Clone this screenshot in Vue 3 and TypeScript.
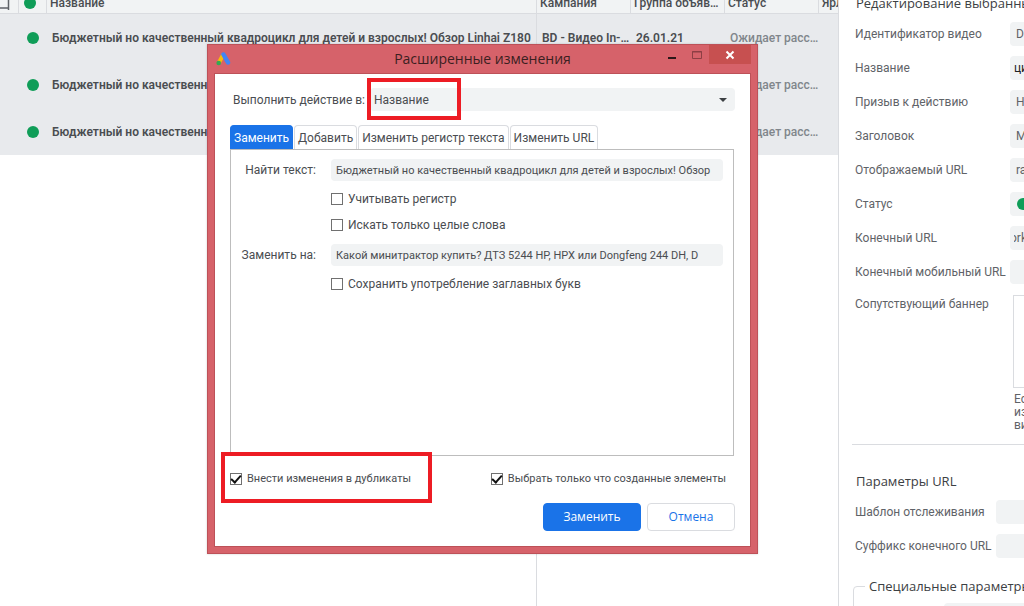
<script setup lang="ts">
import { ref } from 'vue'

interface Row {
  name: string
  campaign: string
  group: string
  status: string
}

const rows: Row[] = Array.from({ length: 3 }, () => ({
  name: 'Бюджетный но качественный квадроцикл для детей и взрослых! Обзор Linhai Z180',
  campaign: 'BD - Видео In-Stream',
  group: '26.01.21',
  status: 'Ожидает рассмотрения',
}))

interface Field {
  id: string
  label: string
  value: string
  kind?: 'edge' | 'cut' | 'dot'
}

const fields: Field[] = [
  { id: 'video-id', label: 'Идентификатор видео', value: 'Do' },
  { id: 'title', label: 'Название', value: 'цик', kind: 'edge' },
  { id: 'cta', label: 'Призыв к действию', value: 'Н' },
  { id: 'headline', label: 'Заголовок', value: 'М' },
  { id: 'display-url', label: 'Отображаемый URL', value: 'ra' },
  { id: 'status', label: 'Статус', value: '', kind: 'dot' },
  { id: 'final-url', label: 'Конечный URL', value: 'ork', kind: 'cut' },
  { id: 'mobile-url', label: 'Конечный мобильный URL', value: '' },
]

const urlFields: Field[] = [
  { id: 'template', label: 'Шаблон отслеживания', value: '' },
  { id: 'suffix', label: 'Суффикс конечного URL', value: '' },
]

const tabs = ['Заменить', 'Добавить', 'Изменить регистр текста', 'Изменить URL']
const activeTab = ref(0)
const target = ref('Название')
const findText = ref('Бюджетный но качественный квадроцикл для детей и взрослых! Обзор')
const replaceText = ref('Какой минитрактор купить? ДТЗ 5244 HP, HPX или Dongfeng 244 DH, D')
const matchCase = ref(false)
const wholeWords = ref(false)
const keepCaps = ref(false)
const applyDuplicates = ref(true)
const selectCreated = ref(true)
</script>

<template>
  <div class="app">
    <main class="list">
      <table class="grid">
        <colgroup>
          <col class="c-flag" />
          <col class="c-dot" />
          <col />
          <col class="c-mid" />
          <col class="c-mid" />
          <col class="c-mid" />
          <col class="c-last" />
        </colgroup>
        <thead>
          <tr>
            <th>
              <svg class="flag" width="12" height="20" viewBox="0 0 12 20" aria-hidden="true">
                <path d="M0 15H8.500M8.500 0V17" fill="none" stroke="#5f6368" stroke-width="1.5" />
              </svg>
            </th>
            <th><span class="dot"></span></th>
            <th class="name">Название</th>
            <th>Кампания</th>
            <th>Группа объявлений</th>
            <th>Статус</th>
            <th class="clip">Ярлыки</th>
          </tr>
        </thead>
        <tbody>
          <tr v-for="(row, i) in rows" :key="i" class="row">
            <td></td>
            <td><span class="dot"></span></td>
            <td class="name">{{ row.name }}</td>
            <td>{{ row.campaign }}</td>
            <td>{{ row.group }}</td>
            <td class="muted">{{ row.status }}</td>
            <td></td>
          </tr>
          <tr class="rest">
            <td></td>
            <td></td>
            <td class="name"></td>
            <td colspan="4"></td>
          </tr>
        </tbody>
      </table>
    </main>

    <aside class="side">
      <h2>Редактирование выбранных</h2>
      <div class="fields">
        <div v-for="f in fields" :key="f.id" class="field">
          <label :for="f.id">{{ f.label }}</label>
          <span class="box">
            <span v-if="f.kind === 'dot'" class="dot"></span>
            <input :id="f.id" :class="f.kind" type="text" :value="f.value" />
          </span>
        </div>
      </div>
      <div class="banner">
        <span class="banner-label">Сопутствующий баннер</span>
        <div class="banner-body">
          <div class="preview"></div>
          <p>Если<br />изоб<br />виде</p>
        </div>
      </div>
      <hr />
      <h2 class="params">Параметры URL</h2>
      <div class="fields url">
        <div v-for="f in urlFields" :key="f.id" class="field">
          <label :for="f.id">{{ f.label }}</label>
          <span class="box"><input :id="f.id" type="text" :value="f.value" /></span>
        </div>
      </div>
      <fieldset class="custom">
        <legend>Специальные параметры</legend>
        <input type="text" aria-label="Специальный параметр" />
      </fieldset>
    </aside>

    <section class="dialog" role="dialog" aria-labelledby="dialog-title">
      <header class="titlebar">
        <svg class="logo" width="16" height="14" viewBox="0 0 16 14" aria-hidden="true">
          <path d="M7 3L3 10.500" stroke="#fbbc04" stroke-width="4" stroke-linecap="round" />
          <path d="M7.500 2.500L12 10.500" stroke="#4285f4" stroke-width="4.500" stroke-linecap="round" />
          <circle cx="2.700" cy="11" r="2.300" fill="#34a853" />
        </svg>
        <h1 id="dialog-title">Расширенные изменения</h1>
        <div class="controls">
          <button type="button" aria-label="Свернуть">
            <svg width="10" height="10" viewBox="0 0 10 10"><path d="M1 8H9" stroke="#2b1718" stroke-width="2" /></svg>
          </button>
          <button type="button" aria-label="Развернуть">
            <svg width="10" height="10" viewBox="0 0 10 10"><path d="M.5 1.500H9.500V8.500H.5ZM0 2H10" fill="none" stroke="#8d3f44" /></svg>
          </button>
          <button type="button" class="close" aria-label="Закрыть">
            <svg width="10" height="10" viewBox="0 0 10 10"><path d="M1.500 1.500L8.500 8.500M8.500 1.500L1.500 8.500" stroke="#fff" stroke-width="2" /></svg>
          </button>
        </div>
      </header>

      <div class="content">
        <div class="action">
          <label for="target">Выполнить действие в:</label>
          <span class="select">
            <select id="target" v-model="target">
              <option>Название</option>
            </select>
            <svg width="8" height="4" viewBox="0 0 8 4" aria-hidden="true"><path d="M0 0H8L4 4Z" fill="#3c4043" /></svg>
          </span>
        </div>

        <div class="tabs" role="tablist">
          <button
            v-for="(t, i) in tabs"
            :key="t"
            type="button"
            role="tab"
            :aria-selected="activeTab === i"
            :class="{ active: activeTab === i }"
            @click="activeTab = i"
          >{{ t }}</button>
        </div>

        <div class="panel" role="tabpanel">
          <div class="line">
            <label for="find">Найти текст:</label>
            <input id="find" v-model="findText" type="text" />
          </div>
          <label class="check"><input v-model="matchCase" type="checkbox" />Учитывать регистр</label>
          <label class="check"><input v-model="wholeWords" type="checkbox" />Искать только целые слова</label>
          <div class="line">
            <label for="replace">Заменить на:</label>
            <input id="replace" v-model="replaceText" type="text" />
          </div>
          <label class="check"><input v-model="keepCaps" type="checkbox" />Сохранить употребление заглавных букв</label>
        </div>

        <div class="options">
          <label class="check"><input v-model="applyDuplicates" type="checkbox" />Внести изменения в дубликаты</label>
          <label class="check"><input v-model="selectCreated" type="checkbox" />Выбрать только что созданные элементы</label>
        </div>

        <footer class="buttons">
          <button type="button" class="primary">Заменить</button>
          <button type="button">Отмена</button>
        </footer>
      </div>

      <div class="mark mark-target"></div>
      <div class="mark mark-duplicates"></div>
    </section>
  </div>
</template>

<style>
body {
  margin: 0;
  background: #fff;
}
</style>

<style scoped>
* {
  box-sizing: border-box;
}

.app {
  position: relative;
  display: flex;
  height: 100vh;
  overflow: hidden;
  font-family: Roboto, "Liberation Sans", sans-serif;
  font-size: 12px;
  line-height: 16px;
  color: #4a4d51;
}

button,
input,
select {
  font: inherit;
  color: inherit;
  margin: 0;
}

.dot {
  display: block;
  width: 12px;
  height: 12px;
  border-radius: 50%;
  background: #0f9d58;
}

/* Video list */
.list {
  flex: 1;
  min-width: 0;
  overflow: hidden;
}

.grid {
  width: 100%;
  height: calc(100vh + 12px);
  margin-top: -12px;
  table-layout: fixed;
  border-collapse: separate;
  border-spacing: 0;
}

.c-flag { width: 19px; }
.c-dot { width: 28px; }
.c-mid { width: 94px; }
.c-last { width: 19px; }

.grid th {
  height: 26px;
  padding: 4px 0 0 3px;
  border-right: 1px solid #dadce0;
  border-bottom: 1px solid #dadce0;
  background: #f1f3f4;
  font-weight: 500;
  text-align: left;
  white-space: nowrap;
  overflow: hidden;
  text-overflow: ellipsis;
}

.grid th:first-child { padding: 4px 0 0; }
.grid th:nth-child(2) { padding: 4px 5px 0; }
.grid th.clip { text-overflow: clip; border-right: 0; }
.flag { display: block; }

.row td {
  height: 47px;
  padding: 0 0 0 5px;
  background: #e8eaed;
  font-weight: 600;
  white-space: nowrap;
  overflow: hidden;
  text-overflow: ellipsis;
}

.row td:nth-child(2) { padding: 0 8px; }
.row td.muted { font-weight: 500; color: #80868b; }
.rest td { padding: 0; }
.grid td.name { border-right: 1px solid #dadce0; }

/* Edit panel */
.side {
  display: flex;
  flex-direction: column;
  flex: none;
  width: 186px;
  padding-left: 16px;
  border-left: 1px solid #dadce0;
  overflow: hidden;
  color: #5f6368;
  white-space: nowrap;
}

.side h2 {
  flex: none;
  margin: -6px 0 0 1px;
  font-family: "Open Sans", "Noto Sans", sans-serif;
  font-size: 13px;
  font-weight: 500;
  line-height: 18px;
  color: #3c4043;
}

.fields {
  display: flex;
  flex-direction: column;
  gap: 10px;
  margin-top: 10px;
}

.field {
  display: grid;
  grid-template-columns: 155px 100px;
  align-items: center;
}

.url .field { grid-template-columns: 141px 114px; }

.box {
  display: flex;
  align-items: center;
  height: 24px;
  border-radius: 4px;
  background: #f1f3f4;
  overflow: hidden;
}

.box .dot {
  flex: none;
  margin-left: 7px;
}

.box input {
  width: 100%;
  height: 24px;
  padding: 0 6px;
  border: 0;
  background: transparent;
}

.box .edge { padding: 0 4px; color: #202124; }
.box .cut { padding: 0 4px; text-indent: -4px; }

.banner {
  display: grid;
  grid-template-columns: 158px 100px;
  margin-top: 11px;
}

.banner-label { padding-top: 1px; }

.preview {
  height: 93px;
  border: 1px solid #dadce0;
}

.banner p {
  margin: 5px 0 0 1px;
  line-height: 13px;
}

.side hr {
  flex: none;
  width: 200px;
  margin: 12px 0 0 -3px;
  border: 0;
  border-top: 1px solid #dadce0;
}

.side .params { margin-top: 27px; }
.url { margin-top: 10px; }

.custom {
  flex: none;
  width: 260px;
  height: 60px;
  margin: 19px 0 0 -2px;
  padding: 8px 0 0 90px;
  border: 1px solid #dadce0;
  border-radius: 4px;
}

.custom legend {
  margin-left: -79px;
  padding: 0 4px;
  font-family: "Open Sans", "Noto Sans", sans-serif;
  font-size: 13px;
  font-weight: 500;
  line-height: 18px;
  color: #3c4043;
}

.custom input {
  height: 24px;
  border: 0;
  border-radius: 4px;
  background: #f1f3f4;
}

/* Dialog window */
.dialog {
  position: absolute;
  top: 44px;
  left: 207px;
  width: 551px;
  padding: 0 6px 6px;
  border: 1px solid #bd5158;
  background: #d6626a;
  box-shadow: 0 0 2px #00000030;
}

.titlebar {
  display: grid;
  grid-template-columns: 128px 1fr 128px;
  height: 28px;
}

.logo { margin: 7px 0 0 2px; }

.titlebar h1 {
  margin: 4px 0 0;
  font-family: "Open Sans", "Noto Sans", sans-serif;
  font-size: 14px;
  font-weight: 400;
  line-height: 20px;
  text-align: center;
  color: #3b1f21;
}

.controls {
  display: flex;
  justify-content: flex-end;
  height: 19px;
}

.controls button {
  display: flex;
  align-items: center;
  justify-content: center;
  width: 25px;
  padding: 0;
  border: 0;
  background: transparent;
}

.controls .close {
  width: 42px;
  background: #c75050;
}

.content {
  padding: 14px 15px 15px;
  border: 1px solid #bd5158;
  background: #fff;
}

.action {
  display: flex;
  align-items: center;
  justify-content: space-between;
  padding-left: 3px;
}

.select {
  position: relative;
  display: flex;
  width: 365px;
}

.select select {
  width: 100%;
  height: 23px;
  padding: 0 4px;
  border: 0;
  border-radius: 4px;
  background: #f1f3f4;
  appearance: none;
}

.select svg {
  position: absolute;
  right: 8px;
  top: 10px;
}

.tabs {
  display: flex;
  gap: 1px;
  margin-top: 14px;
}

.tabs button {
  height: 24px;
  padding: 0 3px;
  border: 1px solid #dadce0;
  border-bottom: 0;
  border-radius: 4px 4px 0 0;
  background: #fff;
}

.tabs .active {
  border-color: #1a73e8;
  background: #1a73e8;
  color: #fff;
}

.panel {
  display: flex;
  flex-direction: column;
  height: 307px;
  margin-right: 1px;
  padding: 9px 10px;
  border: 1px solid #bdbdbd;
}

.line {
  display: grid;
  grid-template-columns: 75px 1fr;
  gap: 15px;
  align-items: center;
}

.line label { text-align: right; }

.line input {
  width: 100%;
  height: 22px;
  padding: 0 5px;
  border: 0;
  border-radius: 4px;
  background: #f1f3f4;
  font-size: 11px;
}

.check {
  display: flex;
  align-items: center;
  gap: 5px;
}

.check input {
  display: grid;
  place-items: center;
  width: 12px;
  height: 12px;
  border: 1px solid #707070;
  background: #fff;
  appearance: none;
}

.check input:checked::before {
  content: "";
  width: 8px;
  height: 4px;
  margin-bottom: 3px;
  border: solid #111;
  border-width: 0 0 2px 2px;
  transform: rotate(-48deg);
}

.panel .check {
  margin: 10px 0 0 90px;
}

.panel .check + .line { margin-top: 11px; }

.options {
  display: flex;
  justify-content: space-between;
  margin-top: 15px;
  padding-right: 9px;
  font-size: 11px;
}

.buttons {
  display: flex;
  justify-content: flex-end;
  gap: 6px;
  margin-top: 16px;
}

.buttons button {
  width: 88px;
  height: 28px;
  padding: 0;
  border: 1px solid #dadce0;
  border-radius: 4px;
  background: #fff;
  font-family: "Open Sans", "Noto Sans", sans-serif;
  font-weight: 500;
  color: #1a73e8;
}

.buttons .primary {
  width: 98px;
  border-color: #1a73e8;
  background: #1a73e8;
  color: #fff;
}

/* Highlight frames */
.mark {
  position: absolute;
  border: 4px solid #ed1c24;
  pointer-events: none;
}

.mark-target {
  top: 33px;
  left: 159px;
  width: 94px;
  height: 42px;
}

.mark-duplicates {
  top: 407px;
  left: 13px;
  width: 211px;
  height: 51px;
}
</style>
